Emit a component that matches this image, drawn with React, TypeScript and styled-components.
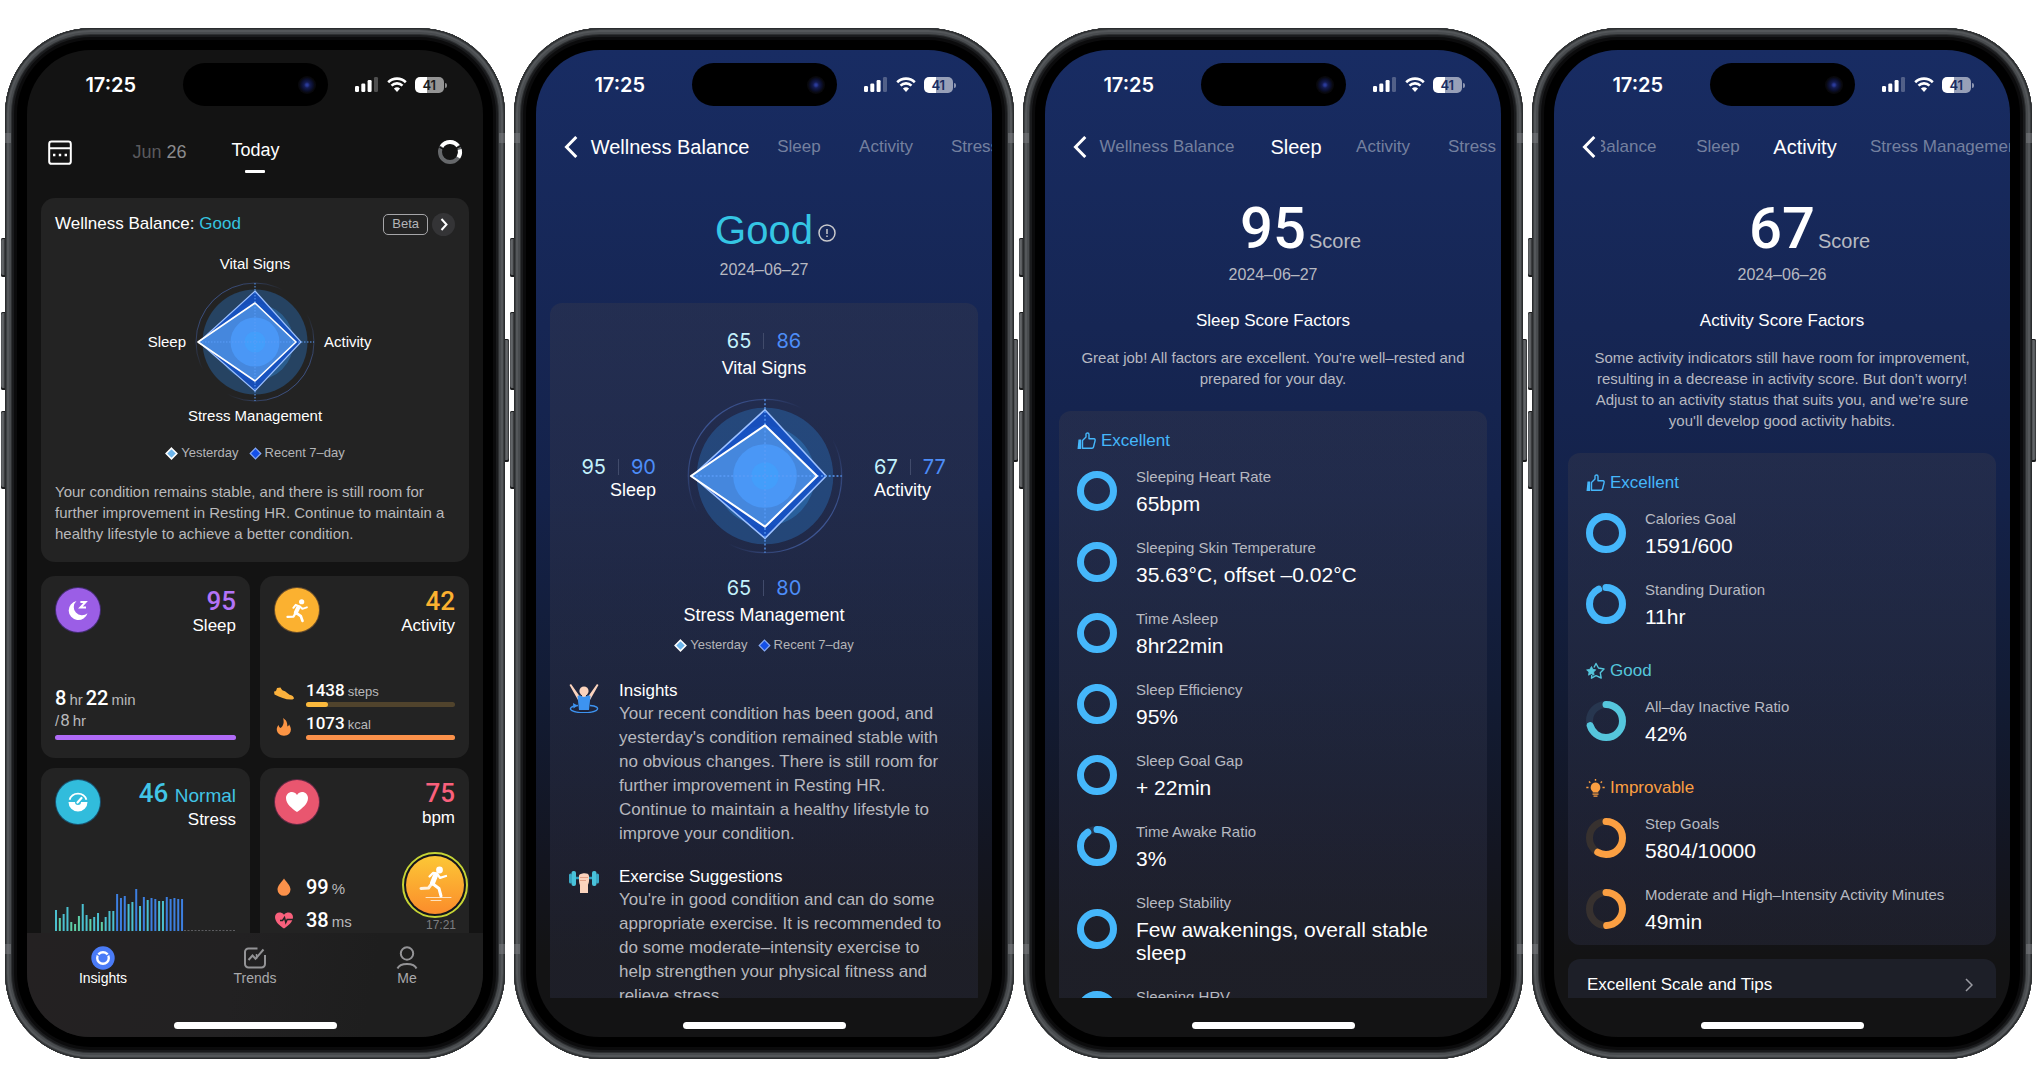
import React from "react";
import styled, { createGlobalStyle, css } from "styled-components";

/* ---------- base ---------- */

const sans = `"Liberation Sans", Arial, Helvetica, sans-serif`;
const numeric = `Roboto, "Liberation Sans", sans-serif`;
const system = `Inter, "Liberation Sans", sans-serif`;

const GlobalStyle = createGlobalStyle`
  *, *::before, *::after { box-sizing: border-box; }
  body { margin: 0; background: #fff; font-family: ${sans}; color: #fff; }
  h1, h2, h3, p, ul, dl, dd, dt { margin: 0; padding: 0; font-weight: 400; }
  ul { list-style: none; }
  button { font: inherit; color: inherit; background: none; border: 0; padding: 0; cursor: pointer; }
  svg { display: block; }
`;

const Gallery = styled.main`
  display: grid;
  grid-template-columns: repeat(4, minmax(0, 1fr));
  gap: 9px;
  padding: 28px 4px 30px 5px;
  overflow: hidden;
`;

/* ---------- phone body ---------- */

const PhoneBody = styled.article`
  position: relative;
  aspect-ratio: 500 / 1031;
  padding: 22px;
  border-radius: 86px;
  background: #000;
  box-shadow:
    inset 0 0 0 1px #2a2c2e,
    inset 0 0 0 2px #3c3f41,
    inset 0 0 0 4px #54575a,
    inset 0 0 0 6px #484b4e,
    inset 0 0 0 7px #2e3032,
    inset 0 0 0 9px #1a1b1d,
    inset 0 0 0 12px #0b0b0c;
`;

const SideKey = styled.span<{ $side: "left" | "right"; $top: number; $length: number }>`
  position: absolute;
  ${(p) => p.$side}: -4px;
  top: ${(p) => p.$top}%;
  width: 4px;
  height: ${(p) => p.$length}%;
  border-radius: ${(p) => (p.$side === "left" ? "2px 0 0 2px" : "0 2px 2px 0")};
  background: linear-gradient(90deg, #4b4d50, #6b6e71 50%, #2a2b2d);
  box-shadow: inset 0 1px #1c1d1e, inset 0 -2px #1c1d1e;
`;

const AntennaBand = styled.span<{ $side: "left" | "right"; $top: number }>`
  position: absolute;
  ${(p) => p.$side}: 0;
  top: ${(p) => p.$top}%;
  width: 6px;
  height: 10px;
  background: rgba(130, 134, 138, 0.45);
`;

const Screen = styled.div<{ $tone: "dark" | "blue" }>`
  display: flex;
  flex-direction: column;
  height: 100%;
  overflow: hidden;
  border-radius: 64px;
  background: ${(p) =>
    p.$tone === "dark"
      ? "#131313"
      : "linear-gradient(180deg, #182c63 0%, #162654 28%, #14224a 45%, #121b33 66%, #131520 82%, #131314 92%)"};
`;

const StatusBar = styled.div`
  flex: none;
  display: grid;
  grid-template-columns: 1fr 145px 1fr;
  align-items: center;
  height: 69px;
  padding: 0 12px;
`;

const Clock = styled.time`
  justify-self: center;
  font: 600 20px/24px ${system};
`;

const Island = styled.div`
  display: flex;
  align-items: center;
  justify-content: flex-end;
  height: 43px;
  padding-right: 12px;
  border-radius: 22px;
  background: #000;
`;

const Lens = styled.span`
  width: 18px;
  height: 18px;
  border-radius: 50%;
  background: radial-gradient(circle, #2a3a9a 0 1px, #141c52 3px, #0a0e2a 6px, #08080c 8px);
`;

const StatusIcons = styled.div`
  justify-self: center;
  display: flex;
  align-items: center;
  gap: 8px;
`;

const Battery = styled.span<{ $tone: string }>`
  position: relative;
  width: 29px;
  height: 16px;
  border-radius: 5px;
  background: linear-gradient(90deg, #fff 41%, rgba(255, 255, 255, 0.55) 41%);
  color: ${(p) => p.$tone};
  text-align: center;
  font: 600 13px/16px ${system};

  &::after {
    content: "";
    position: absolute;
    right: -3px;
    top: 6px;
    width: 2px;
    height: 5px;
    border-radius: 0 2px 2px 0;
    background: rgba(255, 255, 255, 0.5);
  }
`;

const HomeArea = styled.div`
  flex: none;
  display: flex;
  justify-content: center;
  padding: 24px 0 8px;
`;

const HomeBar = styled.span`
  width: 163px;
  height: 7px;
  border-radius: 4px;
  background: #fff;
`;

function Phone({ tone, children }: { tone: "dark" | "blue"; children: React.ReactNode }) {
  return (
    <PhoneBody>
      <SideKey $side="left" $top={20.4} $length={3.8} />
      <SideKey $side="left" $top={27.5} $length={7.6} />
      <SideKey $side="left" $top={37.1} $length={7.6} />
      <SideKey $side="right" $top={30.2} $length={11.9} />
      <AntennaBand $side="left" $top={10.2} />
      <AntennaBand $side="right" $top={10.2} />
      <AntennaBand $side="left" $top={88.8} />
      <AntennaBand $side="right" $top={88.8} />
      <Screen $tone={tone}>
        <StatusBar>
          <Clock>17:25</Clock>
          <Island>
            <Lens />
          </Island>
          <StatusIcons>
            <svg width="24" height="15" viewBox="0 0 24 15" fill="#fff">
              <rect x="0" y="9" width="4" height="6" rx="1.2" />
              <rect x="6.3" y="6.5" width="4" height="8.5" rx="1.2" />
              <rect x="12.6" y="3" width="4" height="12" rx="1.2" />
              <rect x="19" y="0" width="4" height="15" rx="1.2" opacity=".25" />
            </svg>
            <svg width="20" height="15" viewBox="0 0 20 15" fill="none" stroke="#fff" strokeWidth="2.6">
              <path d="M1.2 5.2A12.6 12.6 0 0 1 18.8 5.2" />
              <path d="M4.5 8.6A7.8 7.8 0 0 1 15.5 8.6" />
              <path d="M10 15 6.9 11.6A4.6 4.6 0 0 1 13.1 11.6Z" fill="#fff" stroke="none" />
            </svg>
            <Battery $tone={tone === "dark" ? "#1b1b1b" : "#1a2c60"}>41</Battery>
          </StatusIcons>
        </StatusBar>
        {children}
      </Screen>
    </PhoneBody>
  );
}

/* ---------- radar ---------- */

type Shape = [number, number, number, number];

function Radar({ size, recent, yesterday }: { size: number; recent: Shape; yesterday: Shape }) {
  const points = ([t, r, b, l]: Shape) => `0,${-t} ${r},0 0,${b} ${-l},0`;
  return (
    <svg width={size} height={size} viewBox="-60 -60 120 120" role="img" aria-label="Wellness radar">
      <defs>
        <linearGradient id={`rim${size}`} x1="0" y1="0" x2="1" y2="1">
          <stop offset="0" stopColor="#4a6ab8" />
          <stop offset=".4" stopColor="#4a6ab8" stopOpacity="0" />
          <stop offset=".6" stopColor="#4a6ab8" stopOpacity="0" />
          <stop offset="1" stopColor="#4f70c0" />
        </linearGradient>
      </defs>
      <circle r="59" fill="none" stroke={`url(#rim${size})`} strokeWidth="1" />
      <circle r="52.5" fill="#2b74c0" fillOpacity=".4" />
      <circle r="38.5" fill="#358ee0" fillOpacity=".35" />
      <polygon points={points(recent)} fill="#1450c8" fillOpacity=".85" stroke="#9cc0ff" strokeWidth="1.2" />
      <polygon points={points(yesterday)} fill="#4a8ce0" fillOpacity=".92" />
      <circle r="24.5" fill="#4a97f6" />
      <circle r="10.5" fill="#439efb" />
      <path d="M0-59V59M-56 0H59" stroke="#5a9cf8" strokeWidth="1" strokeDasharray="1.5 1.5" />
      <polygon points={points(yesterday)} fill="none" stroke="#fff" strokeWidth="1.6" strokeLinejoin="round" />
    </svg>
  );
}

const LegendRow = styled.div`
  display: flex;
  justify-content: center;
  gap: 10px;
  font-size: 13px;
  line-height: 18px;
  color: #b4b5b8;
`;

const LegendItem = styled.span`
  display: flex;
  align-items: center;
  gap: 3px;
`;

function Legend() {
  return (
    <LegendRow>
      <LegendItem>
        <svg width="13" height="13" viewBox="0 0 13 13">
          <path d="M6.5 1.2 11.8 6.5 6.5 11.8 1.2 6.5Z" fill="#6cb4ea" stroke="#fff" strokeWidth="1.6" />
        </svg>
        Yesterday
      </LegendItem>
      <LegendItem>
        <svg width="13" height="13" viewBox="0 0 13 13">
          <path d="M6.5 1.2 11.8 6.5 6.5 11.8 1.2 6.5Z" fill="#1450e8" stroke="#86aaf6" strokeWidth="1.2" />
        </svg>
        Recent 7–day
      </LegendItem>
    </LegendRow>
  );
}

/* ---------- screen 1: dashboard ---------- */

const TopBar = styled.header`
  flex: none;
  display: grid;
  grid-template-columns: 1fr auto 1fr;
  align-items: center;
  height: 66px;
  margin-bottom: 13px;
  padding: 0 20px 0 21px;
  font-size: 18px;
  line-height: 20px;
`;

const TopLeft = styled.div`
  display: flex;
  align-items: center;
  justify-content: space-between;
  padding-right: 45px;
`;

const TopRight = styled.button`
  justify-self: end;
`;

const DayButton = styled.button<{ $current?: boolean }>`
  position: relative;
  color: ${(p) => (p.$current ? "#fff" : "#8b8b8e")};
  ${(p) =>
    p.$current &&
    css`
      padding-bottom: 4px;
      &::after {
        content: "";
        position: absolute;
        left: calc(50% - 10px);
        bottom: -9px;
        width: 20px;
        height: 3px;
        border-radius: 1px;
        background: #fff;
      }
    `}
`;

const FadedMonth = styled.span`
  color: #5a5a5e;
`;

const Dashboard = styled.div`
  flex: 1;
  min-height: 0;
  overflow: hidden;
  padding: 0 14px;
`;

const WellnessCard = styled.section`
  padding: 14px 14px 18px;
  margin-bottom: 14px;
  border-radius: 14px;
  background: #232323;
`;

const CardHead = styled.div`
  display: flex;
  align-items: center;
  height: 24px;
  margin-bottom: 18px;
`;

const CardTitle = styled.h2`
  flex: 1;
  font-size: 17px;
  line-height: 20px;

  em {
    font-style: normal;
    color: #35c3e0;
  }
`;

const BetaTag = styled.span`
  height: 21px;
  padding: 0 8px;
  border: 1px solid #a5a5a8;
  border-radius: 5px;
  font-size: 13px;
  line-height: 18px;
  color: #b4b5b8;
`;

const RoundArrow = styled.button`
  display: grid;
  place-items: center;
  width: 23px;
  height: 23px;
  margin-left: 4px;
  border-radius: 50%;
  background: #343436;
`;

const AxisName = styled.p`
  text-align: center;
  font-size: 15px;
  line-height: 20px;
`;

const RadarRow = styled.div`
  display: grid;
  grid-template-columns: 1fr auto 1fr;
  align-items: center;
  gap: 9px;
  margin: 8px 0 4px;

  & > :first-child { text-align: right; }
  & > :last-child { text-align: left; }
`;

const LegendWrap = styled.div`
  margin: 18px 0 19px;
`;

const Summary = styled.p`
  font-size: 15px;
  line-height: 21px;
  color: #b9b9bb;
`;

const TileGrid = styled.div`
  display: grid;
  grid-template-columns: repeat(2, minmax(0, 1fr));
  gap: 10px;
`;

const Tile = styled.section`
  display: flex;
  flex-direction: column;
  height: 182px;
  padding: 11px 14px 18px;
  border-radius: 14px;
  background: #232323;
`;

const TileHead = styled.div`
  display: flex;
  justify-content: space-between;
  text-align: right;
`;

const Badge = styled.span<{ $color: string }>`
  display: grid;
  place-items: center;
  width: 46px;
  height: 46px;
  border: 1px solid rgba(10, 12, 40, 0.6);
  border-radius: 50%;
  background: ${(p) => p.$color};
`;

const TileScore = styled.p<{ $color: string }>`
  color: ${(p) => p.$color};
  font: 500 26px/28px ${numeric};

  span { font: 400 19px/26px ${sans}; }
`;

const TileName = styled.h3`
  font-size: 17px;
  line-height: 22px;
`;

const TileFoot = styled.div`
  margin-top: auto;
`;

const Reading = styled.p<{ $size: number }>`
  display: flex;
  align-items: baseline;
  gap: 3px;
  height: ${(p) => (p.$size === 17 ? 20 : 24)}px;
  color: #b9b9bb;
  font-size: ${(p) => (p.$size === 17 ? 13 : 15)}px;
  line-height: ${(p) => (p.$size === 17 ? 20 : 24)}px;
  white-space: nowrap;

  b {
    font: 500 ${(p) => p.$size}px/${(p) => (p.$size === 17 ? 20 : 24)}px ${numeric};
    color: #fff;
  }
`;

const GoalLine = styled.p`
  display: flex;
  align-items: baseline;
  gap: 1px;
  height: 20px;
  margin-bottom: 5px;
  font-size: 15px;
  line-height: 20px;
  color: #b9b9bb;

  span {
    font: 400 17px/20px ${numeric};
    margin-right: 2px;
  }
`;

const Track = styled.div<{ $color: string; $rest: string; $value: number }>`
  height: 5px;
  border-radius: 3px;
  background: ${(p) => p.$rest};

  &::before {
    content: "";
    display: block;
    width: ${(p) => p.$value}%;
    height: 100%;
    border-radius: 3px;
    background: ${(p) => p.$color};
  }
`;

const IconRow = styled.div`
  display: grid;
  grid-template-columns: 20px 1fr;
  align-items: center;
  gap: 12px;

  & + & { margin-top: 6px; }
`;

const VitalRow = styled(IconRow)`
  & + & { margin-top: 9px; }
`;

const MeterText = styled.div`
  display: grid;
  gap: 2px;
`;

const TabBar = styled.footer`
  position: relative;
  flex: none;
  background: linear-gradient(100deg, #242122 0%, #222122 45%, #1e1e1e 75%);
`;

const Tabs = styled.nav`
  display: grid;
  grid-template-columns: repeat(3, 1fr);
  height: 65px;
  padding-top: 13px;
`;

const TabItem = styled.button<{ $on?: boolean }>`
  display: flex;
  flex-direction: column;
  align-items: center;
  color: ${(p) => (p.$on ? "#fff" : "#a9a9ac")};
  font-size: 14px;
  line-height: 17px;
`;

const Floating = styled.div`
  position: absolute;
  right: 15px;
  bottom: 100%;
  display: flex;
  flex-direction: column;
  align-items: flex-end;
  font-size: 12px;
  line-height: 15px;
  color: #7d7d80;
`;

const WorkoutButton = styled.button`
  display: grid;
  place-items: center;
  width: 66px;
  height: 66px;
  padding: 2px;
  border: 2px solid #c5d335;
  border-radius: 50%;
  background: #15151c;
`;

const WorkoutDisc = styled.span`
  display: grid;
  place-items: center;
  width: 100%;
  height: 100%;
  border-radius: 50%;
  background: linear-gradient(180deg, #fcc736, #fb8c2b);
`;

const FloatTime = styled.span`
  padding-right: 12px;
`;

const stressBars = [
  21, 13, 17, 24, 9, 7, 15, 27, 16, 12, 14, 18, 9, 14, 20, 20, 37, 33, 35, 27, 29, 42, 25, 34, 31, 33, 32, 30, 30, 34,
  32, 33, 32, 32,
];
const tealAfterNoon = [19, 20, 22, 24, 27, 28];

function StressChart() {
  return (
    <svg width="100%" height="44" viewBox="0 0 181 44" preserveAspectRatio="none" role="img" aria-label="Stress today">
      {stressBars.map((h, i) => (
        <rect
          key={i}
          x={i * 3.82}
          y={43 - h}
          width="2"
          height={h}
          fill={i < 16 || tealAfterNoon.includes(i) ? (h < 14 || h === 15 ? "#5fd0a8" : "#4bc0d0") : "#3d7fe0"}
        />
      ))}
      <path d="M129 42.5H181" stroke="#5c5c60" strokeDasharray="2 1.5" />
    </svg>
  );
}

function Runner({ size }: { size: number }) {
  return (
    <svg width={size} height={size} viewBox="0 0 24 24">
      <circle cx="16" cy="3.6" r="2.5" fill="#fff" />
      <g fill="none" stroke="#fff" strokeLinecap="round" strokeLinejoin="round">
        <path d="M8 9.4 10.3 6.6 14 8 16.6 10.4 21 9" strokeWidth="1.9" />
        <path d="M12.8 9 10.4 14" strokeWidth="4" />
        <path d="M11 14.5 15.2 17.4 16.8 22" strokeWidth="2.6" />
        <path d="M10 14.6 8.2 17.8 2.4 18.2" strokeWidth="2.2" />
      </g>
    </svg>
  );
}

function DashboardScreen() {
  return (
    <Phone tone="dark">
      <TopBar>
        <TopLeft>
          <button aria-label="Calendar">
            <svg width="24" height="25" viewBox="0 0 24 25" fill="none" stroke="#fff" strokeWidth="2">
              <rect x="1.2" y="1.5" width="21.6" height="22.3" rx="2.4" />
              <path d="M1 8.2H23" />
              <path d="M5 15h2.400M10.800 15h2.400M16.600 15h2.400" strokeWidth="2.4" />
            </svg>
          </button>
          <DayButton>
            <FadedMonth>Jun</FadedMonth> 26
          </DayButton>
        </TopLeft>
        <DayButton $current>Today</DayButton>
        <TopRight aria-label="Device">
          <svg width="26" height="26" viewBox="0 0 26 26" fill="none" strokeWidth="4">
            <circle cx="13" cy="13" r="10" stroke="#66686b" />
            <path d="M4.600 7.6A10 10 0 0 1 21 7" stroke="#fff" />
            <path d="M22.700 10.500A10 10 0 0 1 21.400 18.500" stroke="#fff" />
            <path d="M2.500 8.200 6.500 10.200M19.500 9 24 6.900" stroke="#131313" strokeWidth="1.400" />
          </svg>
        </TopRight>
      </TopBar>
      <Dashboard>
        <WellnessCard>
          <CardHead>
            <CardTitle>
              Wellness Balance: <em>Good</em>
            </CardTitle>
            <BetaTag>Beta</BetaTag>
            <RoundArrow aria-label="Open wellness balance">
              <svg width="8" height="13" viewBox="0 0 8 13" fill="none" stroke="#fff" strokeWidth="2">
                <path d="M1.500 1 6.500 6.500 1.500 12" />
              </svg>
            </RoundArrow>
          </CardHead>
          <AxisName>Vital Signs</AxisName>
          <RadarRow>
            <AxisName>Sleep</AxisName>
            <Radar size={120} recent={[51, 46, 49, 56]} yesterday={[39, 41, 39, 57]} />
            <AxisName>Activity</AxisName>
          </RadarRow>
          <AxisName>Stress Management</AxisName>
          <LegendWrap>
            <Legend />
          </LegendWrap>
          <Summary>
            Your condition remains stable, and there is still room for further improvement in Resting HR. Continue to
            maintain a healthy lifestyle to achieve a better condition.
          </Summary>
        </WellnessCard>
        <TileGrid>
          <Tile>
            <TileHead>
              <Badge $color="#9b5ee6">
                <svg width="22" height="22" viewBox="0 0 22 22">
                  <path d="M9.500 2A9.600 9.600 0 1 0 20.500 14.200A8 8 0 0 1 9.500 2Z" fill="#fff" />
                  <path d="M13.400 3H18.600L13.400 8.600H19" fill="none" stroke="#fff" strokeWidth="2" />
                </svg>
              </Badge>
              <div>
                <TileScore $color="#b273f7">95</TileScore>
                <TileName>Sleep</TileName>
              </div>
            </TileHead>
            <TileFoot>
              <Reading $size={20}>
                <b>8</b>hr<b>22</b>min
              </Reading>
              <GoalLine>
                /<span>8</span>hr
              </GoalLine>
              <Track $color="#b06bf7" $rest="#3d2d55" $value={100} />
            </TileFoot>
          </Tile>
          <Tile>
            <TileHead>
              <Badge $color="#fbb130">
                <Runner size={25} />
              </Badge>
              <div>
                <TileScore $color="#fbb130">42</TileScore>
                <TileName>Activity</TileName>
              </div>
            </TileHead>
            <TileFoot>
              <IconRow>
                <svg width="20" height="14" viewBox="0 0 20 14" fill="#fbb13c">
                  <path d="M0 4.500C2 4.800 2.500 3 3 1L6.500 0.500C7.500 3 9 3.800 11 4.200L15.500 7.800C18 8.500 20 9.500 20 11.500L18.500 12.500C12 13 7 10.500 0.500 7.500Z" />
                </svg>
                <MeterText>
                  <Reading $size={17}>
                    <b>1438</b>steps
                  </Reading>
                  <Track $color="#fbb93c" $rest="#50432c" $value={15} />
                </MeterText>
              </IconRow>
              <IconRow>
                <svg width="20" height="20" viewBox="0 0 20 20" fill="#fb9444">
                  <path d="M9 1C14 4 13 7.500 13.500 9.500C14.500 9 15 8.300 15 7.300C17.500 11 17.500 14 15.500 16.500C12.500 19.500 7.500 19.500 4.500 16.500C2 13.500 2.500 10.500 4.500 8C5 9.500 5.500 10.500 6.500 11C9.500 9 10.500 5 9 1Z" />
                </svg>
                <MeterText>
                  <Reading $size={17}>
                    <b>1073</b>kcal
                  </Reading>
                  <Track $color="#fb914a" $rest="#50432c" $value={100} />
                </MeterText>
              </IconRow>
            </TileFoot>
          </Tile>
          <Tile>
            <TileHead>
              <Badge $color="#31bcdc">
                <svg width="20" height="20" viewBox="0 0 20 20" fill="none" stroke="#fff">
                  <path d="M1.600 7.800A8.800 8.800 0 0 1 18.400 7.800" strokeWidth="1.800" />
                  <path d="M0.500 10H7A3 3 0 0 0 13 10H19.500A9.500 9.500 0 0 1 0.500 10Z" fill="#fff" stroke="none" />
                  <path d="M9.500 10.500 13.500 6" strokeWidth="2.200" strokeLinecap="round" />
                </svg>
              </Badge>
              <div>
                <TileScore $color="#41c5e6">
                  46 <span>Normal</span>
                </TileScore>
                <TileName>Stress</TileName>
              </div>
            </TileHead>
            <TileFoot>
              <StressChart />
            </TileFoot>
          </Tile>
          <Tile>
            <TileHead>
              <Badge $color="#e9566f">
                <svg width="22" height="20" viewBox="0 0 22 20" fill="#fff">
                  <path d="M11 3C9.500 0.800 7.800 0 6 0C2.600 0 0 2.700 0 6C0 12 6 16.500 11 20C16 16.500 22 12 22 6C22 2.700 19.400 0 16 0C14.200 0 12.500 0.800 11 3Z" />
                </svg>
              </Badge>
              <div>
                <TileScore $color="#f9607c">75</TileScore>
                <TileName>bpm</TileName>
              </div>
            </TileHead>
            <TileFoot>
              <VitalRow>
                <svg width="20" height="18" viewBox="0 0 20 18" fill="#fb914a">
                  <path d="M10 0.500C12 3.500 16.500 7.500 16.500 11.500A6.500 6.300 0 0 1 3.500 11.500C3.500 7.500 8 3.500 10 0.500Z" />
                </svg>
                <Reading $size={20}>
                  <b>99</b>%
                </Reading>
              </VitalRow>
              <VitalRow>
                <svg width="20" height="17" viewBox="0 0 20 17">
                  <path
                    d="M10 2.800C8.500 0.800 7 0.500 5.500 0.500C3 0.500 1 2.500 1 5C1 10 6 14 10 16.500C14 14 19 10 19 5C19 2.500 17 0.500 14.500 0.500C13 0.500 11.500 0.800 10 2.800Z"
                    fill="#f9607c"
                  />
                  <path d="M6 8.500H8.500L10.500 5.500 11.800 10.500 13.200 7.500H20" fill="none" stroke="#232323" strokeWidth="1.500" />
                </svg>
                <Reading $size={20}>
                  <b>38</b>ms
                </Reading>
              </VitalRow>
            </TileFoot>
          </Tile>
        </TileGrid>
      </Dashboard>
      <TabBar>
        <Floating>
          <WorkoutButton aria-label="Last workout">
            <WorkoutDisc>
              <svg width="34" height="38" viewBox="0 0 34 38">
                <circle cx="21.500" cy="4" r="3.400" fill="#fff" />
                <g fill="none" stroke="#fff" strokeLinecap="round" strokeLinejoin="round">
                  <path d="M11.500 10.500 15 7 19 7.500 22 11.800 28 10" strokeWidth="2.300" />
                  <path d="M17.500 9.500 14.500 17" strokeWidth="5" />
                  <path d="M15 18 21 22.500 23 30" strokeWidth="3" />
                  <path d="M13.500 18 10.500 22 3 22.500" strokeWidth="3" opacity=".85" />
                  <path d="M8 31.500H33M13 34.500H23" strokeWidth="1" opacity=".7" />
                </g>
              </svg>
            </WorkoutDisc>
          </WorkoutButton>
          <FloatTime>17:21</FloatTime>
        </Floating>
        <Tabs>
          <TabItem $on>
            <svg width="24" height="24" viewBox="0 0 24 24" fill="none">
              <circle cx="12" cy="12" r="11.700" fill="#4a7bf7" />
              <circle cx="12" cy="12" r="5.800" stroke="#fff" strokeWidth="2.400" />
              <path d="M4 7 8.500 10M15.500 10 20 7" stroke="#4a7bf7" strokeWidth="1.400" />
            </svg>
            Insights
          </TabItem>
          <TabItem>
            <svg width="24" height="24" viewBox="0 0 24 24" fill="none" stroke="#939396" strokeWidth="2">
              <path d="M14.500 2.500H5.500A3.500 3.500 0 0 0 2 6V18A3.500 3.500 0 0 0 5.500 21.500H18.500A3.500 3.500 0 0 0 22 18V9" />
              <path d="M5.500 14 9.500 9.500 12.500 12.800 20.500 3.500" />
              <path d="M13.500 8V13" strokeWidth="1.500" />
            </svg>
            Trends
          </TabItem>
          <TabItem>
            <svg width="24" height="24" viewBox="0 0 24 24" fill="none" stroke="#939396" strokeWidth="2">
              <circle cx="12" cy="7.500" r="6.200" />
              <path d="M2.500 22.500C5 16.500 19 16.500 21.500 22.500" />
            </svg>
            Me
          </TabItem>
        </Tabs>
        <HomeArea>
          <HomeBar />
        </HomeArea>
      </TabBar>
    </Phone>
  );
}

/* ---------- detail screens: shared ---------- */

const DetailHeader = styled.header`
  flex: none;
  display: flex;
  align-items: center;
  height: 56px;
  padding-left: 28px;
`;

const BackButton = styled.button`
  flex: none;
  width: 19px;
`;

const TabViewport = styled.nav`
  flex: 1;
  min-width: 0;
  overflow: hidden;
`;

const TabTrack = styled.div<{ $offset: number }>`
  display: flex;
  gap: 38px;
  margin-left: ${(p) => p.$offset}px;
`;

const TopicTab = styled.button<{ $width: number; $on: boolean }>`
  flex: none;
  display: flex;
  justify-content: center;
  width: ${(p) => p.$width}px;
  white-space: nowrap;
  font-size: ${(p) => (p.$on ? 20 : 17)}px;
  line-height: 28px;
  color: ${(p) => (p.$on ? "#fff" : "#74809f")};
`;

const topics = [
  { name: "Wellness Balance", width: 138 },
  { name: "Sleep", width: 44 },
  { name: "Activity", width: 54 },
  { name: "Stress Management", width: 152 },
];

const Scroller = styled.div`
  flex: 1;
  min-height: 0;
  overflow: hidden;
  padding: 0 14px;
`;

function Detail({ active, offset, children }: { active: string; offset: number; children: React.ReactNode }) {
  return (
    <Phone tone="blue">
      <DetailHeader>
        <BackButton aria-label="Back">
          <svg width="14" height="22" viewBox="0 0 14 22" fill="none" stroke="#fff" strokeWidth="3">
            <path d="M12.300 1 2.500 11 12.300 21" />
          </svg>
        </BackButton>
        <TabViewport>
          <TabTrack $offset={offset}>
            {topics.map((t) => (
              <TopicTab key={t.name} $width={t.width} $on={t.name === active}>
                {t.name}
              </TopicTab>
            ))}
          </TabTrack>
        </TabViewport>
      </DetailHeader>
      <Scroller>{children}</Scroller>
      <HomeArea>
        <HomeBar />
      </HomeArea>
    </Phone>
  );
}

const Panel = styled.section`
  border-radius: 12px;
  background: linear-gradient(180deg, rgba(60, 60, 74, 0.35), rgba(56, 60, 90, 0.28));
`;

const DateLine = styled.p`
  text-align: center;
  font-size: 16px;
  line-height: 20px;
  color: #b7b9c1;
`;

/* ---------- screen 2: wellness balance ---------- */

const Verdict = styled.h1`
  position: relative;
  width: max-content;
  margin: 31px auto 6px;
  font-size: 40px;
  line-height: 48px;
  color: #35c6e4;
`;

const InfoButton = styled.button`
  position: absolute;
  left: calc(100% + 5px);
  top: 18px;
`;

const BalancePanel = styled(Panel)`
  margin-top: 23px;
  padding: 26px 18px 0;
`;

const AxisBlock = styled.div<{ $align?: string; $gap?: number }>`
  display: grid;
  gap: ${(p) => p.$gap ?? 0}px;
  justify-items: ${(p) => p.$align ?? "center"};
  font-size: 18px;
  line-height: 22px;
`;

const Pair = styled.p`
  display: flex;
  align-items: center;
  gap: 12px;
  color: #c3f1fb;
  font: 400 20px/24px ${system};

  &::before {
    content: "";
    order: 1;
    width: 1px;
    height: 16px;
    background: #414b6b;
  }

  span {
    order: 2;
    color: #4d8df8;
  }
`;

const BigRadarRow = styled.div`
  display: grid;
  grid-template-columns: 1fr auto 1fr;
  align-items: center;
  gap: 31px;
  margin: 19px 0 22px;
  padding-left: 2px;

  & > div { padding-top: 4px; }
`;

const BalanceLegend = styled.div`
  margin: 10px 0 26px;
`;

function AxisScore(p: { name: string; now: number; week: number; align?: string; gap?: number }) {
  return (
    <AxisBlock $align={p.align} $gap={p.gap}>
      <Pair>
        {p.now}
        <span>{p.week}</span>
      </Pair>
      {p.name}
    </AxisBlock>
  );
}

const Advice = styled.div`
  display: grid;
  grid-template-columns: 32px minmax(0, 1fr);
  gap: 19px;
  padding-right: 12px;
  margin-bottom: 20px;

  svg { margin-top: 3px; }
`;

const AdviceTitle = styled.h3`
  font-size: 17px;
  line-height: 22px;
`;

const AdviceText = styled.p`
  font-size: 17px;
  line-height: 24px;
  color: #b7b8be;
`;

function WellnessScreen() {
  return (
    <Detail active="Wellness Balance" offset={18}>
      <Verdict>
        Good
        <InfoButton aria-label="About this score">
          <svg width="18" height="18" viewBox="0 0 18 18" fill="none" stroke="#c9c9cc" strokeWidth="1.500">
            <circle cx="9" cy="9" r="8" />
            <path d="M9 5V10M9 11.500V13" />
          </svg>
        </InfoButton>
      </Verdict>
      <DateLine>2024–06–27</DateLine>
      <BalancePanel>
        <AxisScore name="Vital Signs" now={65} week={86} gap={4} />
        <BigRadarRow>
          <AxisScore name="Sleep" now={95} week={90} align="end" />
          <Radar size={156} recent={[51, 47, 48, 56]} yesterday={[39, 40, 39, 57]} />
          <AxisScore name="Activity" now={67} week={77} align="start" />
        </BigRadarRow>
        <AxisScore name="Stress Management" now={65} week={80} gap={4} />
        <BalanceLegend>
          <Legend />
        </BalanceLegend>
        <Advice>
          <svg width="32" height="30" viewBox="0 0 32 30" fill="none">
            <path d="M1.500 2 3 1 13 15 10 17ZM30.500 2 29 1 19 15 22 17Z" fill="#fbd3bd" />
            <circle cx="16" cy="8" r="4.600" fill="#fbd3bd" />
            <path d="M14 10H18V15H14Z" fill="#fbd3bd" />
            <path d="M9.500 13C12 12 13 13 16 14C19 13 20 12 22.500 13L21 27H11Z" fill="#3d93f0" />
            <path d="M10 22.500C3 23 1 25.500 3.500 27.300C9 30.500 23 30.500 28.500 27.300C31.500 25 28 22.800 22 22.500" stroke="#3d93f0" strokeWidth="1.400" />
            <path d="M5 20 9.500 22.500 5.500 25.500Z" fill="#3d93f0" />
          </svg>
          <div>
            <AdviceTitle>Insights</AdviceTitle>
            <AdviceText>
              Your recent condition has been good, and yesterday's condition remained stable with no obvious changes.
              There is still room for further improvement in Resting HR. Continue to maintain a healthy lifestyle to
              improve your condition.
            </AdviceText>
          </div>
        </Advice>
        <Advice>
          <svg width="32" height="24" viewBox="0 0 32 24" fill="none">
            <path d="M5 9H27" stroke="#2f9fbf" strokeWidth="2.500" />
            <rect x="3.500" y="2" width="4.500" height="15" rx="2" fill="#49c2da" />
            <rect x="24" y="2" width="4.500" height="15" rx="2" fill="#49c2da" />
            <rect x="1" y="4.500" width="3" height="10" rx="1.500" fill="#3aa9c6" />
            <rect x="28" y="4.500" width="3" height="10" rx="1.500" fill="#3aa9c6" />
            <path d="M11 7C11 4 21 3 21 7V12C21 14 20 15 20 16V24H12V16C11 14 11 12 11 7Z" fill="#fbd3bd" />
            <path d="M12 8.500H20M12 11.500H18" stroke="#e2a288" />
          </svg>
          <div>
            <AdviceTitle>Exercise Suggestions</AdviceTitle>
            <AdviceText>
              You're in good condition and can do some appropriate exercise. It is recommended to do some
              moderate–intensity exercise to help strengthen your physical fitness and relieve stress.
            </AdviceText>
          </div>
        </Advice>
      </BalancePanel>
    </Detail>
  );
}

/* ---------- screens 3 and 4: scores ---------- */

const ScoreLine = styled.h1`
  position: relative;
  width: max-content;
  margin: 23px auto 7px;
  font: 500 58px/60px ${numeric};
`;

const ScoreUnit = styled.span`
  position: absolute;
  left: calc(100% + 3px);
  bottom: 5px;
  font: 400 20px/24px ${sans};
  color: #b7b9c1;
`;

const FactorsTitle = styled.h2`
  margin: 26px 0 16px;
  text-align: center;
  font-size: 17px;
  line-height: 20px;
`;

const FactorsText = styled.p`
  max-width: 400px;
  margin: 0 auto 22px;
  text-align: center;
  font-size: 15px;
  line-height: 21px;
  color: #b7b9c1;
`;

const FactorPanel = styled(Panel)`
  display: grid;
  gap: 33px;
  padding: 20px 18px 12px;
`;

const Group = styled.div`
  display: grid;
  gap: 23px;
`;

const GroupHead = styled.h3<{ $color: string }>`
  display: flex;
  align-items: center;
  gap: 5px;
  margin-bottom: -7px;
  font-size: 17px;
  line-height: 20px;
  color: ${(p) => p.$color};
`;

const Factor = styled.dl`
  display: grid;
  grid-template-columns: 40px minmax(0, 1fr);
  align-items: center;
  gap: 19px;
`;

const FactorName = styled.dt`
  font-size: 15px;
  line-height: 20px;
  color: #b7b9c1;
`;

const FactorValue = styled.dd`
  margin-top: 5px;
  font-size: 21px;
  line-height: 23px;
`;

function Ring({ value, color, rest }: { value: number; color: string; rest: string }) {
  const length = 2 * Math.PI * 16.5;
  return (
    <svg width="40" height="40" viewBox="0 0 40 40" fill="none" strokeWidth="7">
      <circle cx="20" cy="20" r="16.500" stroke={rest} />
      <circle
        cx="20"
        cy="20"
        r="16.500"
        stroke={color}
        strokeLinecap={value < 100 ? "round" : "butt"}
        strokeDasharray={`${(length * value) / 100} ${length}`}
        transform="rotate(-90 20 20)"
      />
    </svg>
  );
}

const levels = {
  Excellent: { color: "#45b7fb", rest: "#26364f" },
  Good: { color: "#55c6dc", rest: "#27364f" },
  Improvable: { color: "#fb9f42", rest: "#37312f" },
};

type Level = keyof typeof levels;

function LevelIcon({ level }: { level: Level }) {
  const color = levels[level].color;
  if (level === "Excellent")
    return (
      <svg width="19" height="18" viewBox="0 0 19 18" fill="none" stroke={color} strokeWidth="1.400" strokeLinejoin="round">
        <path d="M1.500 7.500H4.200V17H0.500Z" fill={color} stroke="none" />
        <path d="M5.500 16.200V8.500L9 5V2.200C9 0.500 12 0.500 12 2.500V6.800H17C18.200 6.800 18.300 8 18 9L16.500 15C16.300 15.900 15.800 16.200 15 16.200Z" />
      </svg>
    );
  if (level === "Good")
    return (
      <svg width="19" height="18" viewBox="0 0 19 18" fill="none" stroke={color} strokeWidth="1.400" strokeLinejoin="round">
        <path d="M8 5.500 10 1.500 12.500 6 18 7 14.300 10.800 15.200 16 10 13.700 5.500 16.200 5.800 13" />
        <path d="M5.500 4.500 6.800 7.300 9.800 7.800 7.600 10 8.100 13.200 5.300 11.700 2.500 13.200 3 10 0.600 7.900 3.900 7.300Z" fill={color} strokeWidth="0.800" />
      </svg>
    );
  return (
    <svg width="19" height="18" viewBox="0 0 19 18" fill={color}>
      <path d="M9.500 3.500A5 5 0 0 1 12.300 12.500V13.500H6.700V12.500A5 5 0 0 1 9.500 3.500Z" />
      <path d="M6.500 14.500H12.500V15.700H6.500ZM7.500 16.500H11.500V17.700H7.500Z" />
      <path d="M9.500 0V1.800M3 2.500 4.300 3.800M16 2.500 14.700 3.800M0.300 8.500H2.500M16.500 8.500H18.700" stroke={color} strokeWidth="1.400" />
    </svg>
  );
}

type FactorData = { name: string; value: string; ring: number };

function FactorGroup({ level, items }: { level: Level; items: FactorData[] }) {
  return (
    <Group>
      <GroupHead $color={levels[level].color}>
        <LevelIcon level={level} />
        {level}
      </GroupHead>
      {items.map((f) => (
        <Factor key={f.name}>
          <Ring value={f.ring} color={levels[level].color} rest={levels[level].rest} />
          <div>
            <FactorName>{f.name}</FactorName>
            <FactorValue>{f.value}</FactorValue>
          </div>
        </Factor>
      ))}
    </Group>
  );
}

const sleepFactors: FactorData[] = [
  { name: "Sleeping Heart Rate", value: "65bpm", ring: 100 },
  { name: "Sleeping Skin Temperature", value: "35.63°C, offset –0.02°C", ring: 100 },
  { name: "Time Asleep", value: "8hr22min", ring: 97 },
  { name: "Sleep Efficiency", value: "95%", ring: 98 },
  { name: "Sleep Goal Gap", value: "+ 22min", ring: 97 },
  { name: "Time Awake Ratio", value: "3%", ring: 90 },
  { name: "Sleep Stability", value: "Few awakenings, overall stable sleep", ring: 97 },
  { name: "Sleeping HRV", value: "38ms", ring: 100 },
];

function SleepScreen() {
  return (
    <Detail active="Sleep" offset={6}>
      <ScoreLine>
        95<ScoreUnit>Score</ScoreUnit>
      </ScoreLine>
      <DateLine>2024–06–27</DateLine>
      <FactorsTitle>Sleep Score Factors</FactorsTitle>
      <FactorsText>Great job! All factors are excellent. You're well–rested and prepared for your day.</FactorsText>
      <FactorPanel>
        <FactorGroup level="Excellent" items={sleepFactors} />
      </FactorPanel>
    </Detail>
  );
}

const TipsLink = styled.button`
  display: flex;
  align-items: center;
  justify-content: space-between;
  width: 100%;
  height: 52px;
  margin-top: 14px;
  padding: 0 23px 0 19px;
  border-radius: 12px;
  background: #1d1f28;
  font-size: 17px;
  line-height: 20px;
`;

function ActivityScreen() {
  return (
    <Detail active="Activity" offset={-81}>
      <ScoreLine>
        67<ScoreUnit>Score</ScoreUnit>
      </ScoreLine>
      <DateLine>2024–06–26</DateLine>
      <FactorsTitle>Activity Score Factors</FactorsTitle>
      <FactorsText>
        Some activity indicators still have room for improvement, resulting in a decrease in activity score. But don’t
        worry! Adjust to an activity status that suits you, and we’re sure you'll develop good activity habits.
      </FactorsText>
      <FactorPanel>
        <FactorGroup
          level="Excellent"
          items={[
            { name: "Calories Goal", value: "1591/600", ring: 100 },
            { name: "Standing Duration", value: "11hr", ring: 92 },
          ]}
        />
        <FactorGroup level="Good" items={[{ name: "All–day Inactive Ratio", value: "42%", ring: 70 }]} />
        <FactorGroup
          level="Improvable"
          items={[
            { name: "Step Goals", value: "5804/10000", ring: 58 },
            { name: "Moderate and High–Intensity Activity Minutes", value: "49min", ring: 49 },
          ]}
        />
      </FactorPanel>
      <TipsLink>
        Excellent Scale and Tips
        <svg width="8" height="14" viewBox="0 0 8 14" fill="none" stroke="#9a9ba2" strokeWidth="1.500">
          <path d="M1 1 7 7 1 13" />
        </svg>
      </TipsLink>
    </Detail>
  );
}

export default function App() {
  return (
    <>
      <GlobalStyle />
      <Gallery>
        <DashboardScreen />
        <WellnessScreen />
        <SleepScreen />
        <ActivityScreen />
      </Gallery>
    </>
  );
}
